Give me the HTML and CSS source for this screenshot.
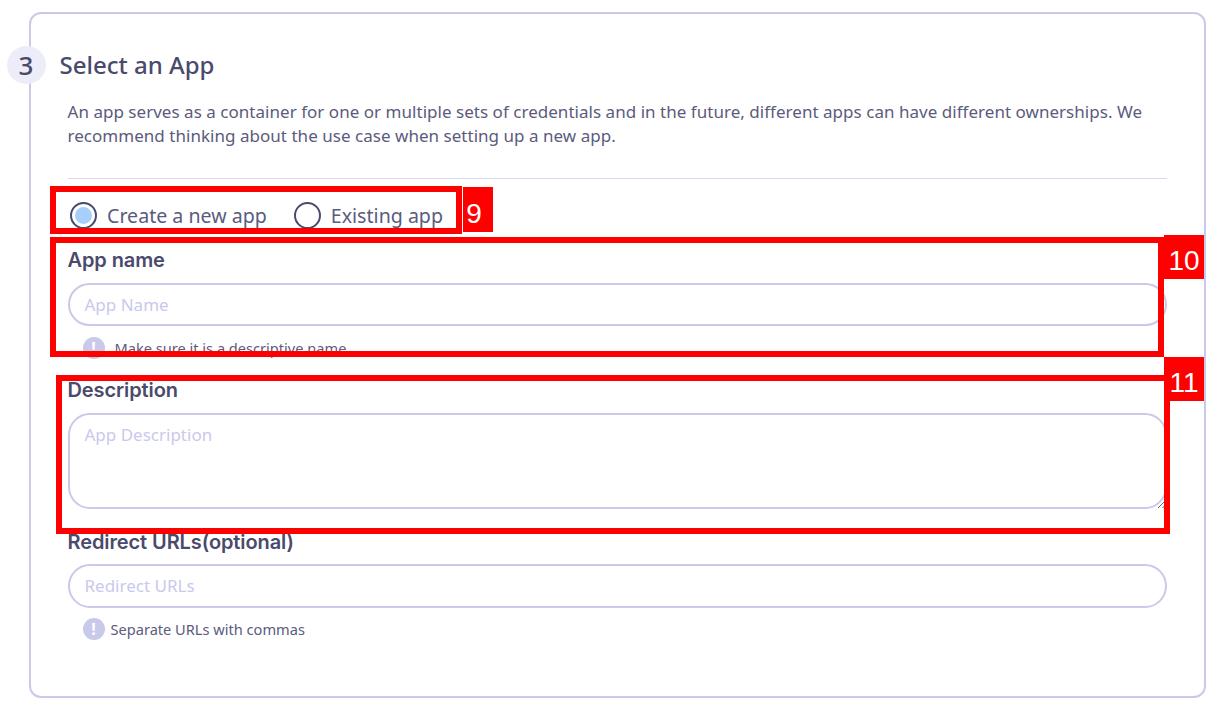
FILE: index.html
```html
<!DOCTYPE html>
<html lang="en">
<head>
<meta charset="utf-8">
<title>Select an App</title>
<link rel="stylesheet" href="styles.css">
</head>
<body>
<main class="card">
  <header class="head">
    <span class="step">3</span>
    <h2 class="title">Select an App</h2>
  </header>
  <div class="content">
    <p class="intro">An app serves as a container for one or multiple sets of credentials and in the future, different apps can have different ownerships. We recommend thinking about the use case when setting up a new app.</p>
    <hr class="rule">
    <div class="radios">
      <label class="radio"><span class="dot on"></span>Create a new app</label>
      <label class="radio"><span class="dot"></span>Existing app</label>
    </div>
    <div class="field name-field">
      <div class="label">App name</div>
      <div class="input"><span class="ph">App Name</span></div>
      <div class="hint"><span class="info">!</span>Make sure it is a descriptive name</div>
    </div>
    <div class="field desc-field">
      <div class="label">Description</div>
      <div class="input area"><span class="ph">App Description</span>
        <svg class="grip" width="10" height="10" viewBox="0 0 10 10"><path d="M1 9 9 1M5.500 9 9 5.500" stroke="#666" fill="none"/></svg>
      </div>
    </div>
    <div class="field url-field">
      <div class="label">Redirect URLs(optional)</div>
      <div class="input url-input"><span class="ph">Redirect URLs</span></div>
      <div class="hint url-hint"><span class="info">!</span>Separate URLs with commas</div>
    </div>
  </div>
</main>
<div class="mark m9"></div><div class="tag t9">9</div>
<div class="mark m10"></div><div class="tag t10">10</div>
<div class="mark m11"></div><div class="tag t11">11</div>
</body>
</html>
```
FILE: styles.css
```css
* { box-sizing: border-box; }
html, body { margin: 0; height: 708px; overflow: hidden; background: #fff; }
body { padding: 12px 14px 10px 29px; font-family: "Noto Sans", sans-serif; color: #5b5b7d; position: relative; }
.card { height: 686px; border: 2.500px solid #c9c9e9; border-radius: 12px; background: #fff; }
.head { display: flex; align-items: center; margin: 31.500px 0 0 -24.500px; gap: 14px; height: 38px; }
.step { width: 39px; height: 38px; border-radius: 50%; background: #ecedf8; display: flex; align-items: center; justify-content: center; font: 500 26px/1 "Noto Sans", sans-serif; color: #4a4a6c; flex: none; }
.title { margin: 0; font: 500 24px/38px "Noto Sans", sans-serif; color: #4a4a6c; }
.content { margin: 0 37.500px 0 36.500px; }
.intro { margin: 16px 0 0; font-size: 17px; letter-spacing: 0.03px; line-height: 24px; color: #5b5b7d; width: 1095px; }
.rule { margin: 30px 0 0; border: 0; height: 1px; background: #d8d8ee; }
.radios { display: flex; gap: 27px; margin: 23px 0 0 2.500px; height: 28px; align-items: center; }
.radio { display: flex; align-items: center; gap: 10px; font-size: 19.600px; line-height: 28px; color: #5b5b7d; }
.dot { width: 27px; height: 27px; border-radius: 50%; border: 2.500px solid #4a4a6c; background: #fff; flex: none; }
.dot.on { background: #a6d0fb; box-shadow: inset 0 0 0 3px #fff; }
.field { display: block; }
.name-field { margin-top: 16px; }
.desc-field { margin-top: 17px; }
.url-field { margin-top: 19px; }
.label { font: 600 20px/28px Inter, sans-serif; color: #4a4a6c; letter-spacing: -0.1px; }
.input { position: relative; margin-top: 9px; height: 43px; border: 2.500px solid #c9c9e9; border-radius: 22px; padding: 2px 15px 0; display: flex; align-items: center; background: #fff; }
.area { height: 96px; align-items: flex-start; padding-top: 7px; }
.url-input { margin-top: 8px; height: 44px; padding-top: 1px; }
.ph { font-size: 17px; line-height: 26px; color: #c9c9ec; }
.grip { position: absolute; right: -2px; bottom: -2px; }
.hint { display: flex; align-items: center; gap: 10px; margin: 11px 0 0 15px; font-size: 14.600px; line-height: 22px; color: #5b5b7d; }
.url-hint { gap: 6px; margin-top: 10px; }
.info { width: 22px; height: 22px; border-radius: 50%; background: #c9c9e9; color: #fff; font: 700 16px/22px "Noto Sans", sans-serif; text-align: center; flex: none; }
.mark { position: absolute; border: 6px solid #f00; }
.m9 { left: 50px; top: 186px; width: 412px; height: 48px; }
.m10 { left: 50px; top: 237px; width: 1114px; height: 120px; }
.m11 { left: 56px; top: 375px; width: 1114px; height: 159px; }
.tag { position: absolute; background: #f00; color: #fff; font: 400 28px/1 "Liberation Sans", sans-serif; display: flex; align-items: center; justify-content: center; padding-top: 8px; }
.t9 { left: 463px; top: 187px; width: 30px; height: 45px; padding-right: 8px; }
.t10 { left: 1164px; top: 235px; width: 40px; height: 44px; }
.t11 { left: 1164px; top: 357px; width: 40px; height: 44px; }
```
